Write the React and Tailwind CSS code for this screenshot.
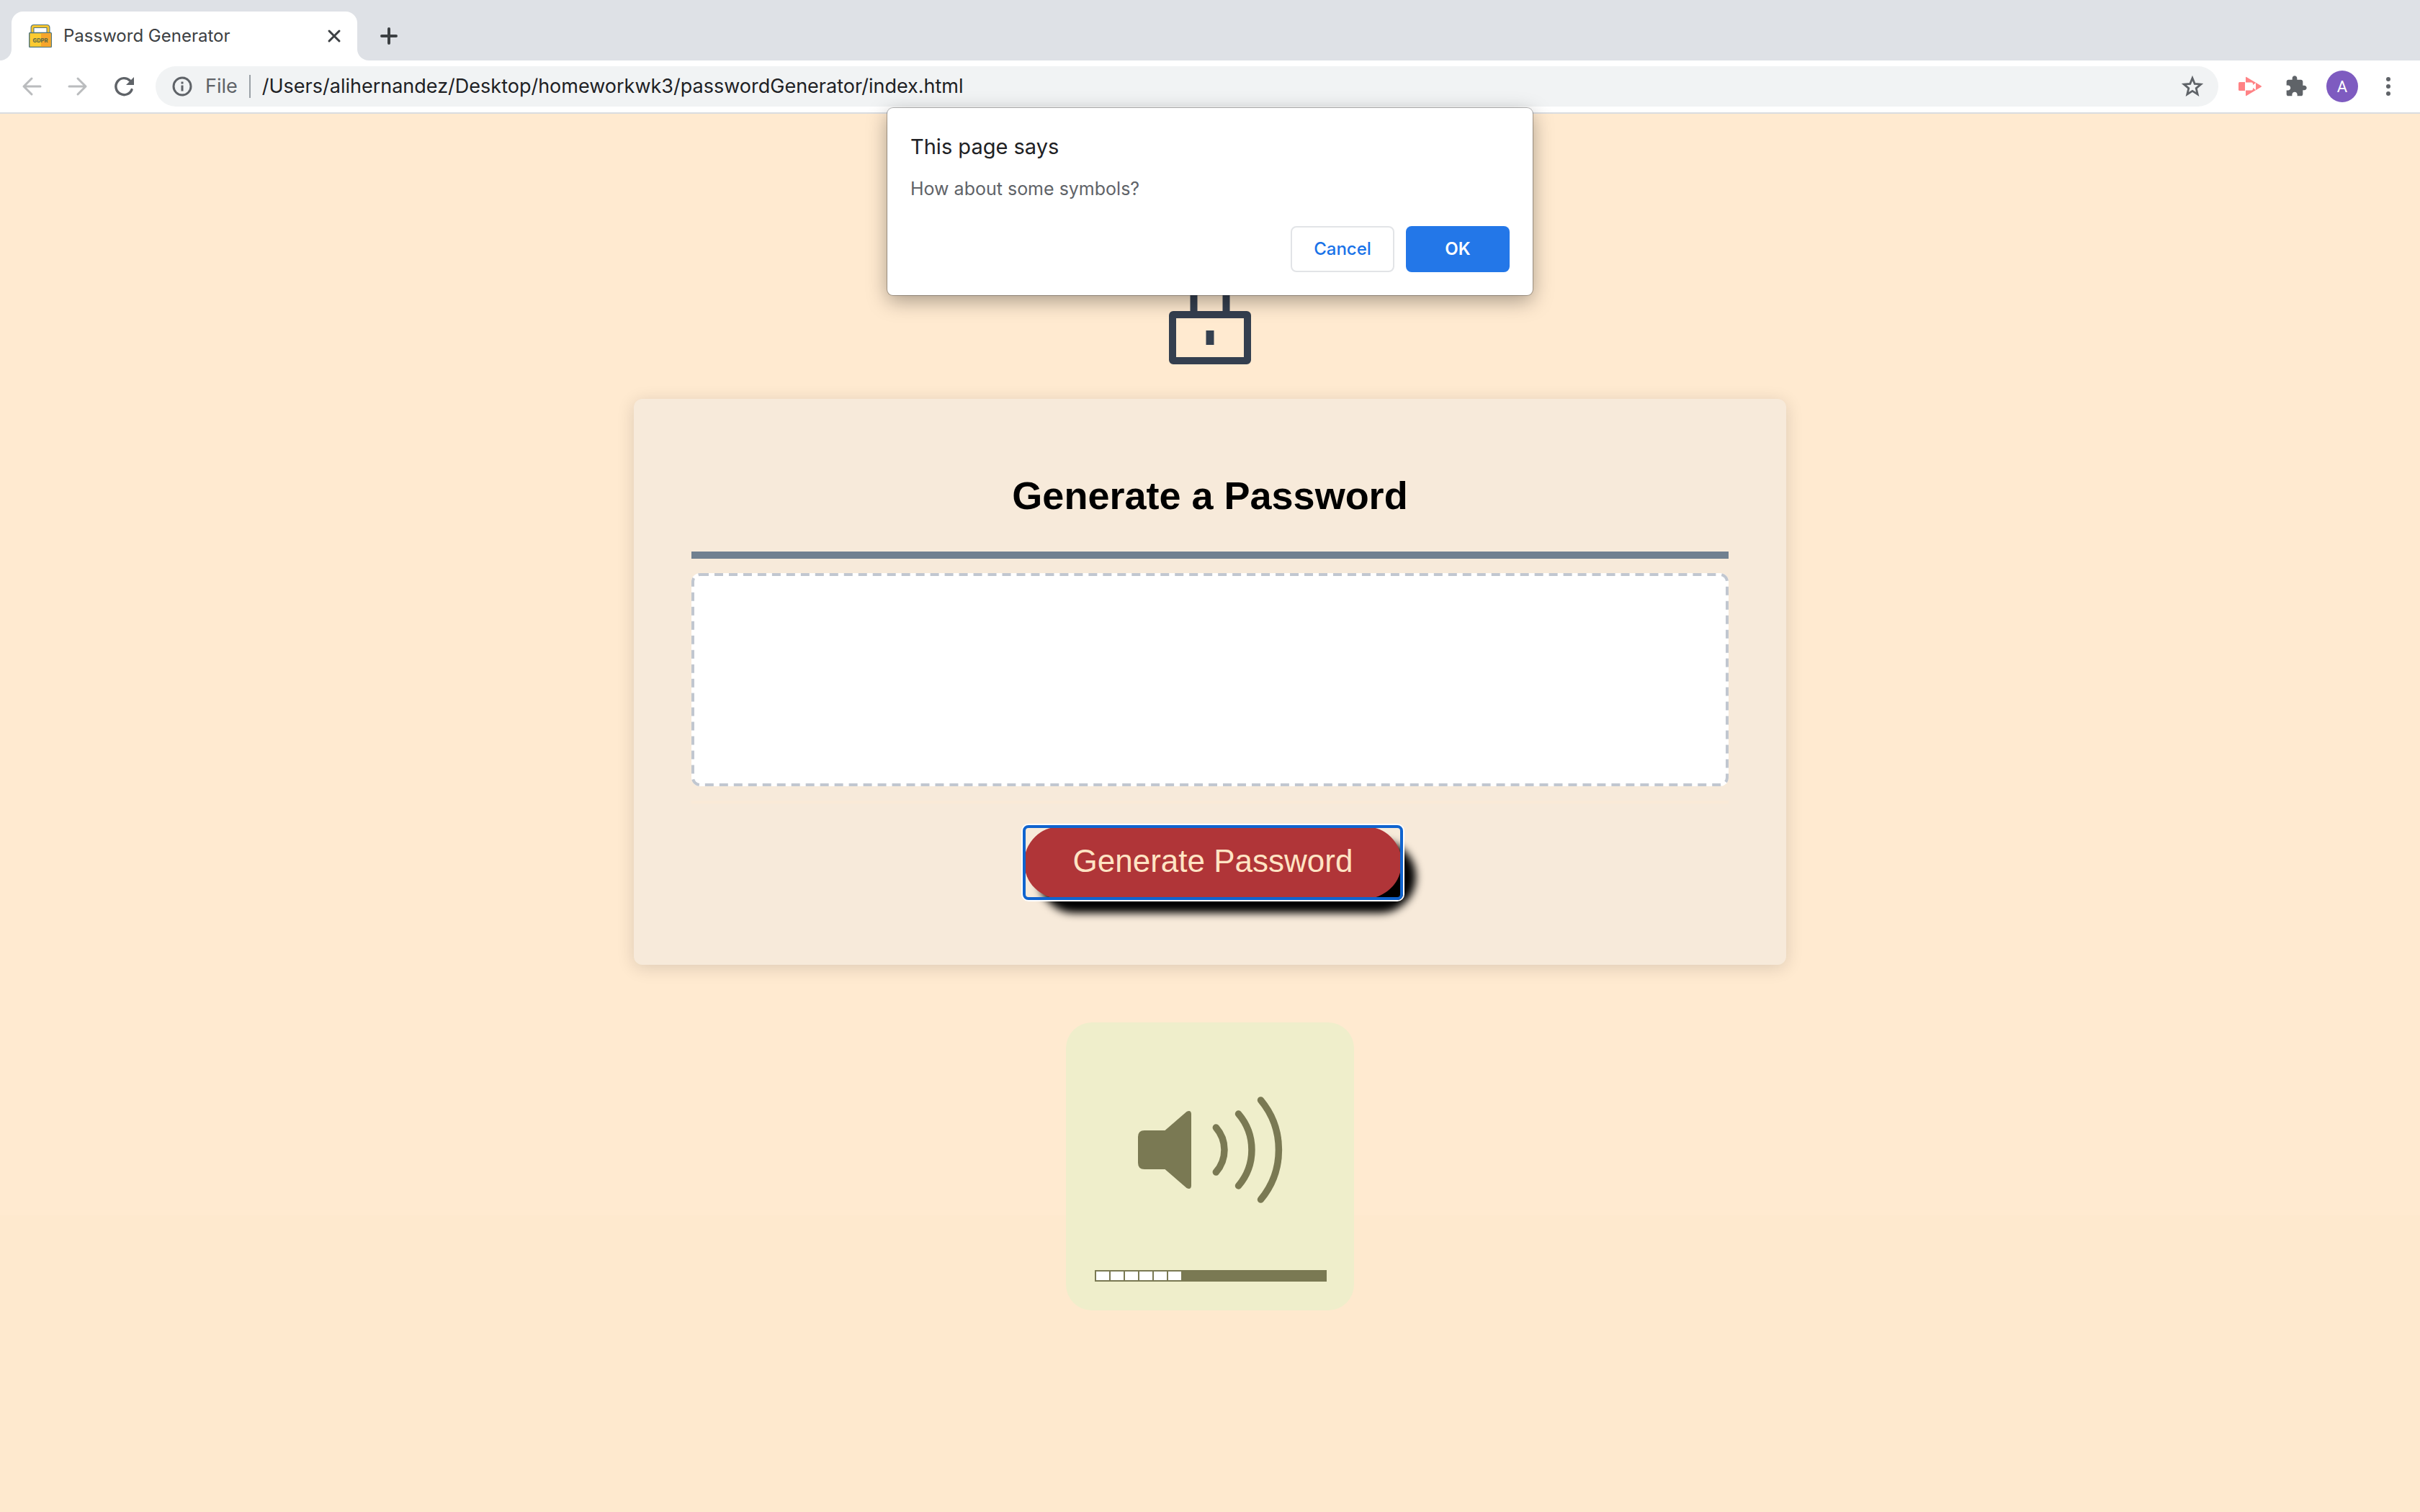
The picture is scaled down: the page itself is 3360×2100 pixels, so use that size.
import React from "react";

const ui = "font-['Inter','Roboto',sans-serif]";

function Favicon() {
  return (
    <svg viewBox="0 0 32 32" className="size-8 shrink-0" aria-hidden="true">
      <path d="M5 12V4.500Q5 2.500 7 2.500H25Q27 2.500 27 4.500V12" fill="none" stroke="#4d7480" strokeWidth="5" />
      <path d="M5 12V4.500Q5 2.500 7 2.500H25Q27 2.500 27 4.500V12" fill="none" stroke="#fbc52d" strokeWidth="2.800" />
      <rect x="0.7" y="11.500" width="30.600" height="20" rx="1" fill="#fccb30" stroke="#4d7480" strokeWidth="1.400" />
      <path d="M17 12.200h13.600v18.600H17z" fill="#f6a52c" />
      <text x="16" y="24.500" textAnchor="middle" fontSize="7.500" fontWeight="800" fill="#5d6a45" fontFamily="Inter">GDPR</text>
    </svg>
  );
}

function TabStrip() {
  return (
    <div className="flex h-[84px] items-end bg-[#dee1e6]">
      <div className="flex h-full w-4 shrink-0 bg-white">
        <div className="h-full w-full rounded-br-2xl bg-[#dee1e6]" />
      </div>
      <div className="flex h-full w-[480px] shrink-0 items-end bg-[#dee1e6]">
        <div className="flex h-[68px] w-full items-center rounded-t-2xl bg-white pl-6 pr-5">
          <Favicon />
          <span className={`${ui} ml-4 flex-1 text-2xl text-[#3c4043]`}>Password Generator</span>
          <button aria-label="Close tab" className="flex size-6 items-center justify-center">
            <svg viewBox="0 0 24 24" className="size-6" stroke="#3c4043" strokeWidth="3" strokeLinecap="round"><path d="M5 5l14 14M19 5L5 19" /></svg>
          </button>
        </div>
      </div>
      <div className="flex h-full w-4 shrink-0 bg-white">
        <div className="h-full w-full rounded-bl-2xl bg-[#dee1e6]" />
      </div>
      <button aria-label="New tab" className="mb-[22px] ml-4 size-6">
        <svg viewBox="0 0 24 24" className="size-6" stroke="#3c4043" strokeWidth="4" strokeLinecap="round"><path d="M12 2v20M2 12h20" /></svg>
      </button>
    </div>
  );
}

function Toolbar() {
  return (
    <div className="flex h-[74px] items-center border-b-2 border-[#dadce0] bg-white pl-7 pr-7">
      <button aria-label="Back" className="size-8">
        <svg viewBox="0 0 32 32" className="size-8" fill="none" stroke="#babcbe" strokeWidth="3" strokeLinecap="round" strokeLinejoin="round"><path d="M28 16H5M16 5L5 16l11 11" /></svg>
      </button>
      <button aria-label="Forward" className="ml-8 size-8">
        <svg viewBox="0 0 32 32" className="size-8" fill="none" stroke="#babcbe" strokeWidth="3" strokeLinecap="round" strokeLinejoin="round"><path d="M4 16h23M16 5l11 11-11 11" /></svg>
      </button>
      <button aria-label="Reload" className="ml-8 size-8">
        <svg viewBox="0 0 32 32" className="size-8" fill="none" stroke="#5f6368" strokeWidth="3.400" strokeLinecap="round"><path d="M27 20.500A11.500 11.500 0 1 1 24.500 8" /><path d="M30 3v11H19z" fill="#5f6368" stroke="none" /></svg>
      </button>
      <div className="ml-7 flex h-14 flex-1 items-center rounded-full bg-[#f1f3f4] pl-[23px] pr-5">
        <svg viewBox="0 0 28 28" className="size-7 shrink-0" fill="none" stroke="#5f6368" strokeWidth="3"><circle cx="14" cy="14" r="12" /><path d="M14 12.500v8M14 7.500v3" /></svg>
        <span className={`${ui} ml-[18px] text-[27px] text-[#5f6368]`}>File</span>
        <span className="ml-4 h-8 w-0.5 bg-[#9aa0a6]" />
        <input aria-label="Address" readOnly value="/Users/alihernandez/Desktop/homeworkwk3/passwordGenerator/index.html" className={`${ui} ml-4 flex-1 bg-transparent text-[27px] text-[#202124] outline-none`} />
        <button aria-label="Bookmark this page" className="size-8">
          <svg viewBox="0 0 32 32" className="size-8" fill="none" stroke="#5f6368" strokeWidth="2.800"><path d="M16 4.500l3.200 7.900 8.500.7-6.500 5.500 2 8.300-7.200-4.500-7.200 4.500 2-8.300-6.500-5.500 8.500-.7z" /></svg>
        </button>
      </div>
      <button aria-label="Screen recorder" className="ml-7 size-8">
        <svg viewBox="0 0 32 32" className="size-8" fill="#ff8285"><path d="M1.500 10H9v12H1.500Q0 22 0 20.500v-9Q0 10 1.500 10z" /><path d="M10 3.500Q10 2.500 11 3L31.500 15.200q1 .8 0 1.600L11 29q-1 .5-1-.5z" /><path d="M9.500 10.500H18q2 0 2 2v1.500l4-3v10l-4-3v1.500q0 2-2 2H9.500z" fill="#fff" /></svg>
      </button>
      <button aria-label="Extensions" className="ml-8 size-8">
        <svg viewBox="0 0 24 24" className="size-8" fill="#5f6368"><path d="M20.500 11H19V7c0-1.100-.9-2-2-2h-4V3.500C13 2.120 11.880 1 10.500 1S8 2.120 8 3.500V5H4c-1.100 0-1.990.9-1.990 2v3.800H3.500c1.490 0 2.700 1.210 2.700 2.700s-1.210 2.700-2.700 2.700H2V20c0 1.100.9 2 2 2h3.800v-1.500c0-1.490 1.210-2.700 2.700-2.700 1.490 0 2.700 1.210 2.700 2.700V22H17c1.100 0 2-.9 2-2v-4h1.500c1.380 0 2.500-1.120 2.500-2.500S21.880 11 20.500 11z" /></svg>
      </button>
      <button aria-label="Profile" className="ml-[26px] flex size-11 items-center justify-center rounded-full bg-[#7e5bc0] font-['Roboto',sans-serif] text-[22px] text-white">A</button>
      <button aria-label="Menu" className="ml-[26px] size-8">
        <svg viewBox="0 0 32 32" className="size-8" fill="#5f6368"><circle cx="16" cy="6" r="3" /><circle cx="16" cy="16" r="3" /><circle cx="16" cy="26" r="3" /></svg>
      </button>
    </div>
  );
}

function Dialog() {
  return (
    <div role="dialog" aria-label="This page says" className={`${ui} absolute left-1/2 top-[150px] w-[896px] -translate-x-1/2 rounded-lg bg-white px-8 pt-[34px] pb-8 shadow-[0_0_0_1px_rgba(0,0,0,0.28),0_8px_28px_rgba(0,0,0,0.34)]`}>
      <h2 className="text-[29px] leading-10 text-[#202124]">This page says</h2>
      <p className="mt-5 text-[25px] leading-9 text-[#5f6368]">How about some symbols?</p>
      <div className="mt-[34px] flex justify-end gap-4">
        <button className="h-16 w-36 rounded-lg border-2 border-[#e2e4e7] text-2xl font-medium text-[#1a73e8]">Cancel</button>
        <button className="h-16 w-36 rounded-lg bg-[#2377e8] text-2xl font-semibold text-white">OK</button>
      </div>
    </div>
  );
}

function Lock() {
  return (
    <svg viewBox="0 0 114 126" className="h-[126px] w-[114px]" fill="none" stroke="#343f4f" strokeWidth="10" aria-hidden="true">
      <path d="M34.500 55V25q0-20 22.500-20t22.500 20v30" />
      <rect x="5" y="57" width="104" height="64" rx="1" strokeLinejoin="round" />
      <path d="M57 79v20" strokeWidth="11" />
    </svg>
  );
}

function VolumeOverlay() {
  return (
    <div className="mt-20 flex size-[400px] flex-col rounded-[36px] bg-[#efeecb] px-10 pt-[100px]">
      <svg viewBox="20 0 320 160" className="h-40 w-80" fill="#7a7953" aria-hidden="true">
        <path d="M89 50h28.500l30-26q6-3 6.500 3v100q-.5 6-6.500 3l-30-26H89q-9 0-9-9V59q0-9 9-9z" />
        <g fill="none" stroke="#7a7953" strokeWidth="9.500" strokeLinecap="round">
          <path d="M188.300 46a47 47 0 0 1 0 62" />
          <path d="M219.500 27a77 77 0 0 1 0 100" />
          <path d="M250.500 8a108 108 0 0 1 0 138" />
        </g>
      </svg>
      <div className="mt-[84px] flex h-4 w-[322px] gap-0.5 bg-[#7a7953] p-0.5">
        {[0, 1, 2, 3, 4, 5].map((n) => <span key={n} className="w-[18px] bg-white" />)}
      </div>
    </div>
  );
}

export default function App() {
  return (
    <div className="relative flex min-h-screen flex-col bg-[linear-gradient(#ffead0_80.4%,#fee9ce_80.4%)]">
      <TabStrip />
      <Toolbar />
      <main className="flex flex-1 flex-col items-center pt-[222px]">
        <Lock />
        <section className="mt-12 w-full max-w-[1600px] rounded-xl bg-[#f7eada] px-20 pb-[92px] pt-[102px] font-['Liberation_Sans',sans-serif] shadow-[0_4px_24px_rgba(0,0,0,0.14)]">
          <h1 className="text-center text-[54px] leading-16 font-bold text-black">Generate a Password</h1>
          <hr className="mt-[46px] border-t-[10px] border-[#708090]" />
          <div className="relative mt-5">
            <textarea aria-label="Your secure password" readOnly className="block h-[296px] w-full resize-none rounded-xl bg-white p-5 outline-none" />
            {/* drawn at half size and doubled, which gives the border its long dashes */}
            <span className="pointer-events-none absolute left-0 top-0 h-1/2 w-1/2 origin-top-left scale-200 rounded-md border-2 border-dashed border-[#c1c7d0]" />
          </div>
          <div className="mt-5 border-t-4 border-[#faead7] pt-8 text-center">
            <button className="relative ml-2 h-[100px] w-[524px] rounded-[50px] bg-[#b03538] pb-1 text-[44px] text-[#ffe4c4] shadow-[20px_20px_12px_#000]">
              Generate Password
              <span className="pointer-events-none absolute -inset-0.5 rounded-lg border-4 border-[#1064cf] shadow-[0_0_0_2px_#fff]" />
            </button>
          </div>
        </section>
        <VolumeOverlay />
      </main>
      <Dialog />
    </div>
  );
}
